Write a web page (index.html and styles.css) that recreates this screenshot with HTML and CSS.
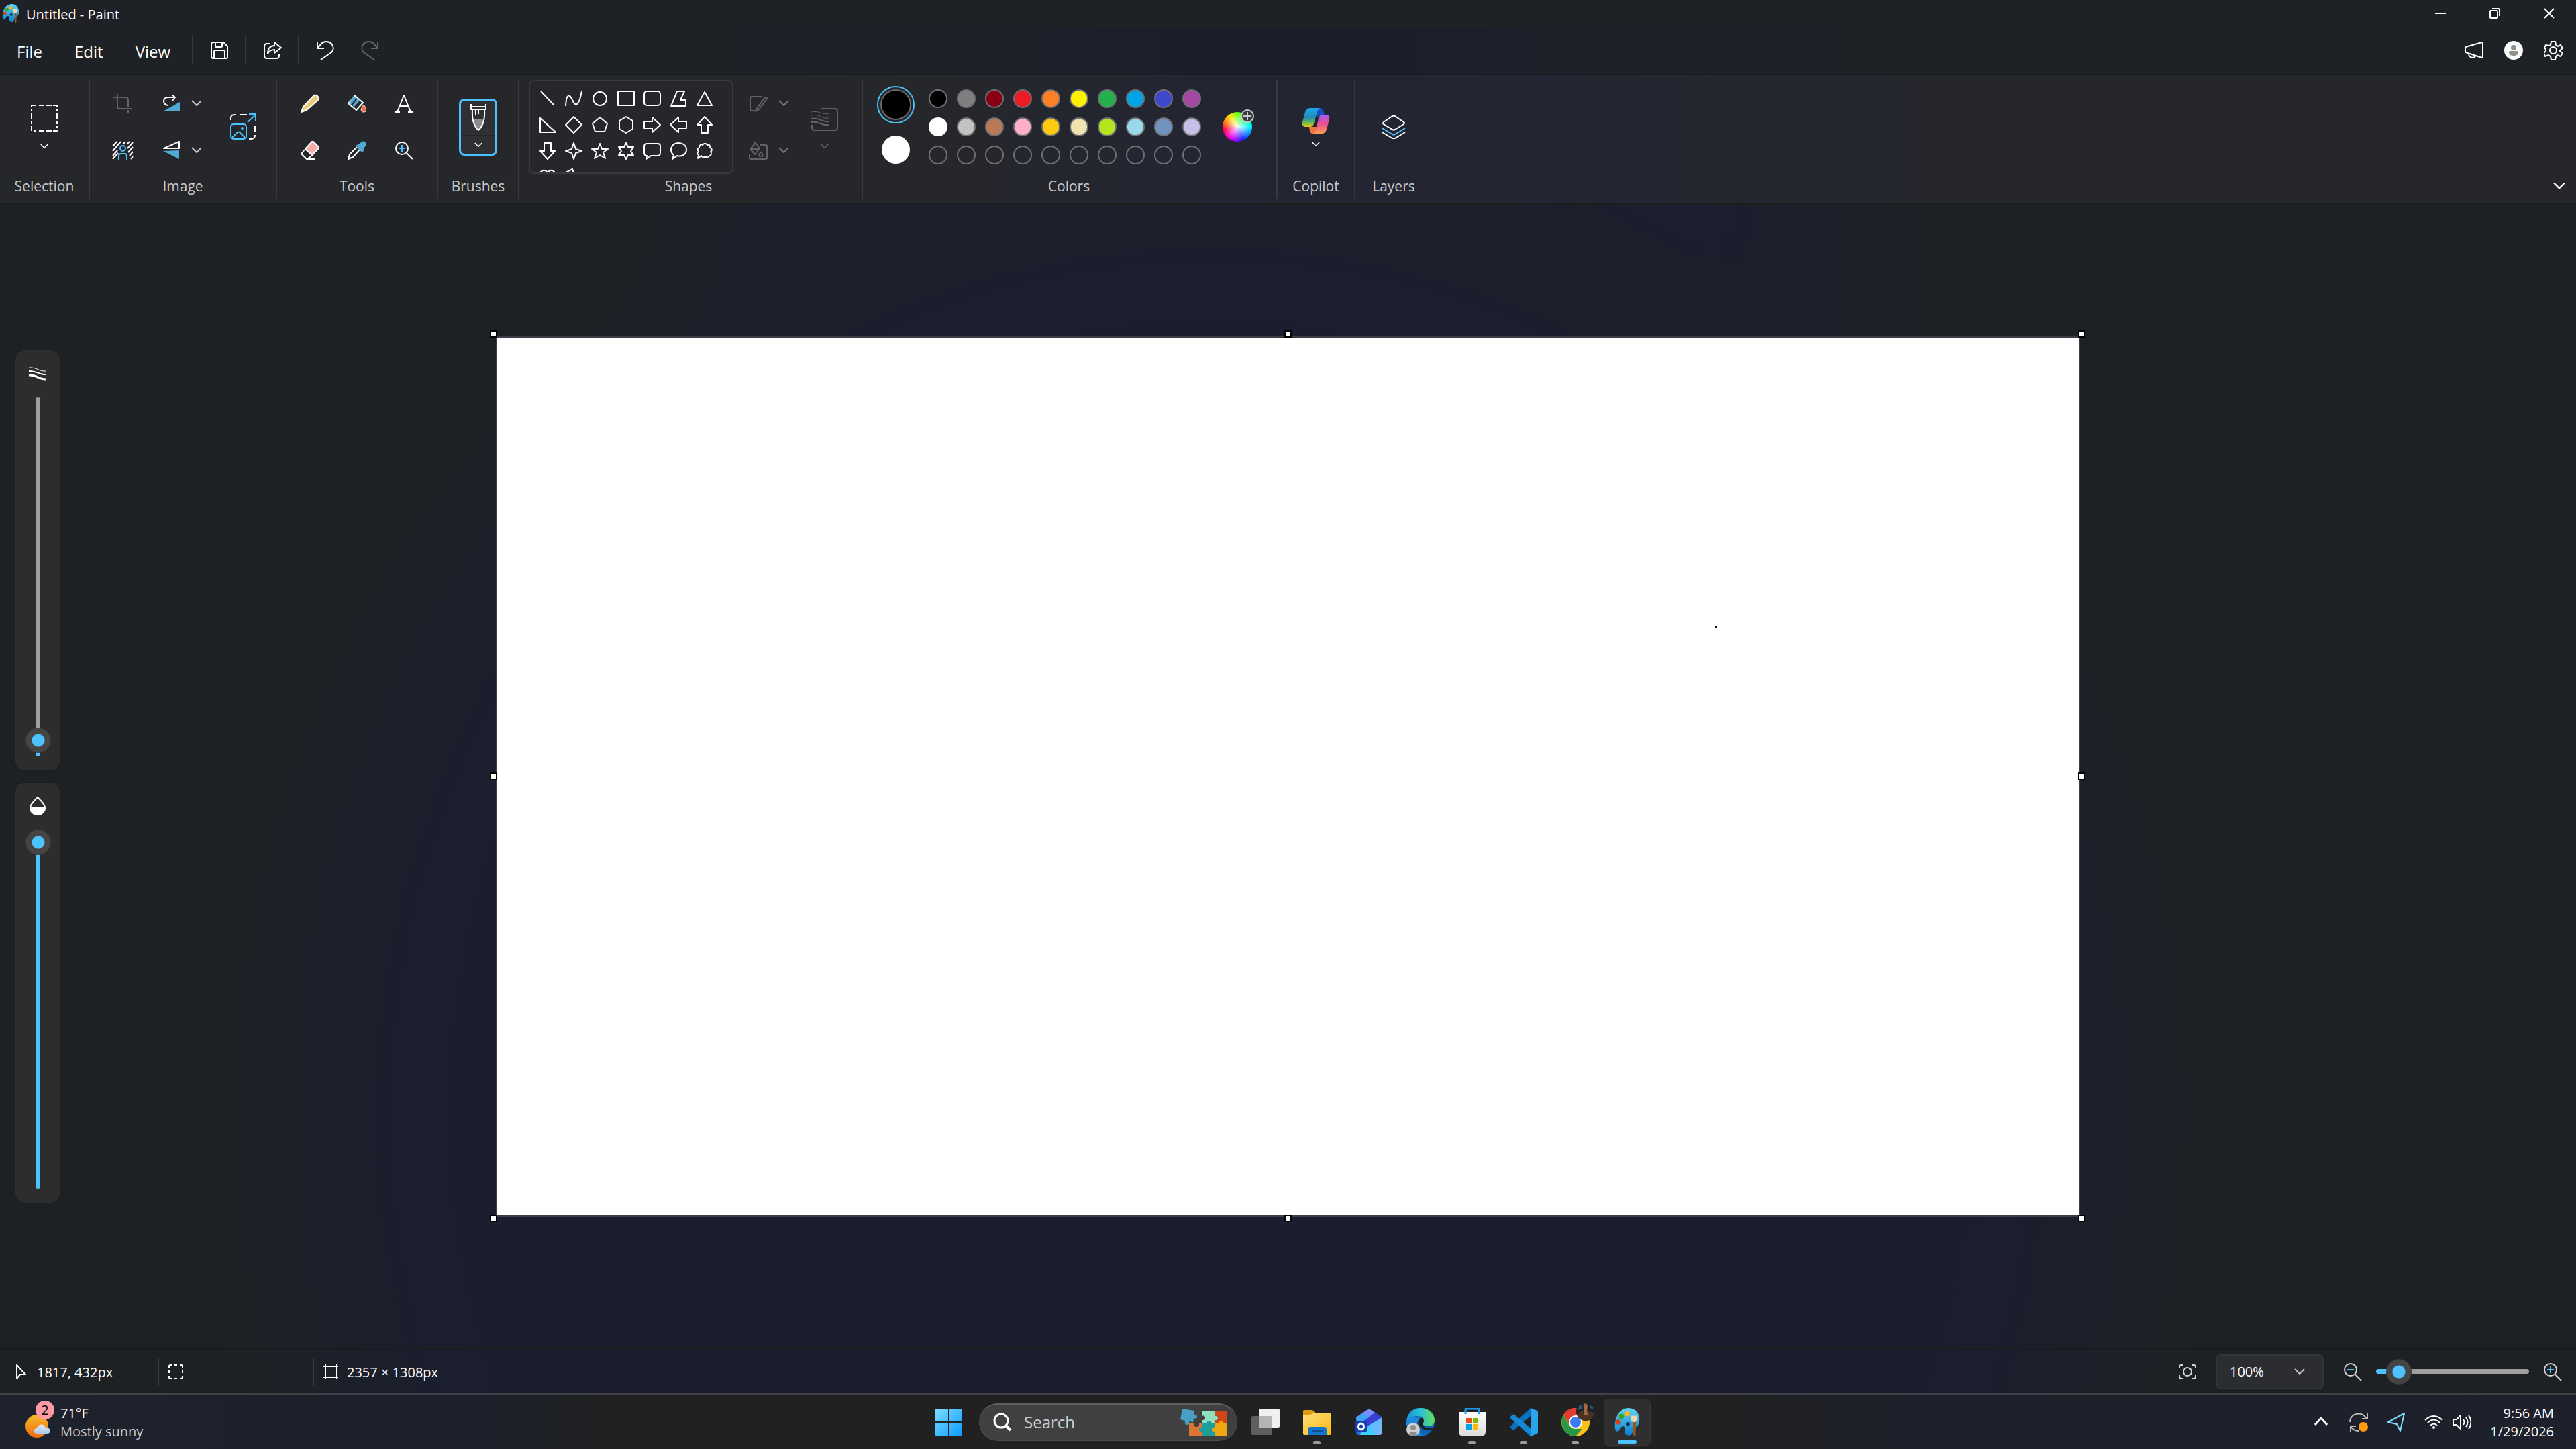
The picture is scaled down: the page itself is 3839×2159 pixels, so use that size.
FILE: index.html
```html
<!DOCTYPE html>
<html lang="en">
<head>
<meta charset="utf-8">
<meta name="viewport" content="width=device-width, initial-scale=1">
<title>Untitled - Paint</title>
<link rel="stylesheet" href="styles.css">
</head>
<body>
<svg class="sprite" aria-hidden="true">
  <defs>
    <linearGradient id="g-win" x1="0" y1="0" x2="1" y2="1"><stop offset="0" stop-color="#7fdcff"/><stop offset="1" stop-color="#0a9bff"/></linearGradient>
    <linearGradient id="g-folder" x1="0" y1="0" x2="1" y2="1"><stop offset="0" stop-color="#ffde7a"/><stop offset="1" stop-color="#fcb813"/></linearGradient>
    <linearGradient id="g-palette" x1="0" y1="0" x2="0" y2="1"><stop offset="0" stop-color="#5fd3f5"/><stop offset="1" stop-color="#0a7fd6"/></linearGradient>
    <linearGradient id="g-sun" x1="0" y1="0" x2="0" y2="1"><stop offset="0" stop-color="#f5bb2b"/><stop offset="1" stop-color="#f0690f"/></linearGradient>
    <linearGradient id="g-cloud" x1="0" y1="0" x2="0" y2="1"><stop offset="0" stop-color="#d8e8fb"/><stop offset="1" stop-color="#a9c8f2"/></linearGradient>
    <linearGradient id="g-cop1" x1="0" y1="0" x2="0" y2="1"><stop offset="0" stop-color="#1fa6ee"/><stop offset=".5" stop-color="#1f8fb4"/><stop offset=".75" stop-color="#5fb35a"/><stop offset="1" stop-color="#f3c51c"/></linearGradient>
    <linearGradient id="g-cop2" x1="0" y1="0" x2="0" y2="1"><stop offset="0" stop-color="#a259f0"/><stop offset=".5" stop-color="#ee4f8f"/><stop offset="1" stop-color="#ffa04e"/></linearGradient>
    <linearGradient id="g-edge" x1="0" y1="0" x2="1" y2="0"><stop offset="0" stop-color="#1a93d8"/><stop offset=".5" stop-color="#2bbfd4"/><stop offset="1" stop-color="#63df5b"/></linearGradient>
    <linearGradient id="g-store" x1="0" y1="0" x2="0" y2="1"><stop offset="0" stop-color="#fff"/><stop offset="1" stop-color="#dadada"/></linearGradient>
    <linearGradient id="g-out" x1="0" y1="0" x2="1" y2="1"><stop offset="0" stop-color="#43c6f8"/><stop offset="1" stop-color="#7fb4ff"/></linearGradient>
  </defs>

  <symbol id="chev" viewBox="0 0 16 10"><path d="M1 1l7 7 7-7"/></symbol>
  <symbol id="palette" viewBox="0 0 40 44">
    <path fill="url(#g-palette)" stroke="none" d="M22 0C34 0 40 10 39 20c-1 9-6 10-9 12-2 1-1 4-2 7-2 4-7 5-10 2-4-4 1-9-3-12-4-2-5 2-8 6-3 3-6 1-6-4C0 13 9 0 22 0z"/>
    <circle cx="20" cy="9" r="4" fill="#fbb614" stroke="none"/><circle cx="11" cy="13" r="4" fill="#3aa31a" stroke="none"/><circle cx="6" cy="22" r="4" fill="#cf4717" stroke="none"/><circle cx="21" cy="25" r="3" fill="#1b2a38" stroke="none"/>
    <path d="M29 20h5l-1 24h-3z" fill="#9a5a14" stroke="none"/><path d="M25 12h11c0 5-1 8-3 10h-4c-3-2-4-5-4-10z" fill="#f0d6b0" stroke="none"/>
  </symbol>
  <symbol id="save" viewBox="0 0 28 28"><path d="M5 2h15l6 6v16q0 2-2 2H5q-3 0-3-3V5q0-3 3-3zM8 2v6q0 1 1 1h8q1 0 1-1V2M6 26V16q0-2 2-2h12q2 0 2 2v10"/></symbol>
  <symbol id="share" viewBox="0 0 28 28"><path d="M10 4H6Q2 4 2 8v14q0 4 4 4h14q4 0 4-4v-2M17 2l10 8-10 8v-5c-5 0-8 2-10 6 0-8 4-12 10-12z"/></symbol>
  <symbol id="undo" viewBox="0 0 28 28"><path d="M2 1v10h10M2 11l6-7c4-4 11-4 15 0 4 5 3 10 0 13L7 28"/></symbol>
  <symbol id="redo" viewBox="0 0 28 28"><path d="M26 1v10H16M26 11l-6-7C16 0 9 0 5 4 1 9 2 14 5 17l16 11"/></symbol>
  <symbol id="mega" viewBox="0 0 28 28"><path d="M26 2L3 8.500q-2 .5-2 2v5q0 1.500 2 2L26 25q1 0 1-1V3q0-1-1-1zM6 19c0 6 9 8 10 3"/></symbol>
  <symbol id="gear" viewBox="0 0 28 28"><circle cx="14" cy="14" r="5"/><path d="M11 1h6l1 5 3 2 4-2 3 5-4 3v1l4 3-3 5-5-2-2 2-1 5h-6l-1-5-3-2-5 2-2-5 3-3v-2L1 10l2-4 5 1 2-1z"/></symbol>
  <symbol id="marquee" viewBox="0 0 42 42"><path stroke-dasharray="8 3" d="M8 2H2v8M13 2h20M34 2h6v8M2 14v16M40 14v16M2 32v8h6M13 40h20M34 40h6v-8"/></symbol>
  <symbol id="crop" viewBox="0 0 28 28"><path d="M6 0v19q0 3 3 3h19M0 5h5M9 5h9q4 0 4 4v10M22 24v4"/></symbol>
  <symbol id="rotate" viewBox="0 0 28 28"><path d="M9 17C5 16 3 14 3 11c0-4 3-6 7-6h10M15 1l5 4-4 5"/><path class="bf" d="M27 12v14H2z"/></symbol>
  <symbol id="flip" viewBox="0 0 28 28"><path d="M26 1v10H3z"/><path class="bf" d="M26 14v13L2 15z"/></symbol>
  <symbol id="removebg" viewBox="0 0 32 28"><path d="M1 8l6-7M1 15L13 1M1 22L8 14M1 27l8-9M16 5l4-4M22 5l4-4M23 11l8-9M24 17l7-8M26 22l5-6M28 27l3-4"/><g class="bl"><circle cx="16" cy="11" r="4"/><path d="M10 28v-6q0-3 3-3h6q3 0 3 3v6"/></g></symbol>
  <symbol id="resize" viewBox="0 0 42 42"><path d="M3 11V8q0-5 5-5h2M16 3h11M39 20v8M39 33q0 6-6 6h-3"/><g class="bl"><rect x="3" y="17" width="23" height="22" rx="4"/><path d="M5 37l8-8q1-1 3 0l8 8M28 14L40 3M30 2h10v11"/><circle cx="20" cy="23" r="1"/></g></symbol>
  <symbol id="pencil" viewBox="0 0 28 28"><path fill="#edc97a" d="M19 3q3-3 6 0t1 6L9 24l-8 3 3-8z"/></symbol>
  <symbol id="bucket" viewBox="0 0 28 28"><path d="M9 1l14 12-10 11L1 14 11 3"/><path class="bf" d="M9 3l4 3-8 10-3-3zM15 7l3 3-8 9-3-2z"/><path d="M24 16c6 8 4 11 0 11s-6-3 0-11z" fill="#f4683c" stroke-width="1"/></symbol>
  <symbol id="text" viewBox="0 0 28 28"><path d="M4 27L14 2l10 25M8 18h12M1 27h7M20 27h7"/></symbol>
  <symbol id="eraser" viewBox="0 0 28 28"><path d="M6 13L2 18q-1 1 0 2l7 7h13M10 27l9-7"/><path fill="#f4acac" d="M17 1q1-1 2 0l8 8q1 1 0 2L17 21 7 12z"/></symbol>
  <symbol id="picker" viewBox="0 0 28 28"><path d="M14 9L3 20l-2 7 7-3 10-11"/><path class="bf" d="M13 6l4-1q5-6 9-4 4 3-1 9l-2 7-6-3z"/></symbol>
  <symbol id="zoomin" viewBox="0 0 28 28"><circle cx="11" cy="11" r="9"/><path d="M18 18l9 9"/><path class="bl" d="M11 6v10M6 11h10"/></symbol>
  <symbol id="zoomout" viewBox="0 0 28 28"><circle cx="11" cy="11" r="9"/><path d="M18 18l9 9"/><path class="bl" d="M6 11h10"/></symbol>
  <symbol id="brush" viewBox="0 0 28 42"><path d="M3 1v8h22V1M3 5h22"/><path fill="#8c8c8c" stroke="none" d="M6 25q8-4 16 0-1 8-8 15Q7 33 6 25z"/><path d="M5 9c-1 16 2 25 9 31 7-6 10-15 9-31M10 10v8M14 10v6"/></symbol>
  <symbol id="penbox" viewBox="0 0 28 28"><path d="M20 4H4Q2 4 2 6v17q0 2 2 2h5M13 20L24 5q3-1 3 2L15 23l-5 3z"/></symbol>
  <symbol id="fillbox" viewBox="0 0 28 28"><path d="M1 20v5q0 2 2 2h22q2 0 2-2V8q0-2-2-2h-8M9 2l7 9-7 9-7-8 7-8zM2 12h14M18 16c4 5 3 7 0 7s-4-2 0-7"/></symbol>
  <symbol id="size" viewBox="0 0 42 42"><path d="M16 7h20q4 0 4 4v24q0 4-4 4H6q-4 0-4-4v-4"/><path d="M1 12c12-3 16 5 26 2M1 17c12-3 16 6 26 4" stroke-width="1"/><path d="M1 22c12-3 16 6 26 4M1 27c12-2 16 6 26 4"/></symbol>
  <symbol id="layers" viewBox="0 0 36 36"><path d="M16 2q2-1 4 0l13 9q2 1 0 3L20 22q-2 1-4 0L3 14q-2-1 0-3z"/><path class="bl" d="M1 20l15 9q2 1 4 0l15-9"/><path d="M1 26l15 9q2 1 4 0l15-9"/></symbol>
  <symbol id="copilot" viewBox="0 0 42 40"><path fill="#1551c4" stroke="none" d="M20 1h7q4 0 5 4l2 6h-4q-5 0-7 5z"/><path fill="url(#g-cop1)" stroke="none" d="M12 1h16q-4 1-5 6l-5 17q-1 5-6 5H5q-5 0-4-7L5 7q2-6 7-6z"/><path fill="#f1743a" stroke="none" d="M11 29h11l-2 10h-4q-3 0-4-4z"/><path fill="url(#g-cop2)" stroke="none" d="M29 11h8q5 0 4 7l-4 15q-2 6-7 6H16q4-1 5-6l4-16q1-5 4-6z"/></symbol>
  <symbol id="wave" viewBox="0 0 28 28"><path stroke-width="1" d="M1 5c12-1 15 6 26 5"/><path d="M1 10c12-1 15 6 26 5"/><path stroke-width="3" d="M1 16c12-1 15 7 26 6"/></symbol>
  <symbol id="drop" viewBox="0 0 28 28"><path d="M14 1C8 7 3 12 3 17a11 10 0 0 0 22 0C25 12 20 7 14 1z"/><path fill="#fff" stroke="none" d="M3 15h22c1 8-5 12-11 12S2 23 3 15z"/></symbol>
  <symbol id="cursor" viewBox="0 0 28 28"><path d="M8 4v20l5-6h8z"/></symbol>
  <symbol id="selbox" viewBox="0 0 28 28"><path d="M4 8V6q0-2 2-2h2M12 4h4M20 4h2q2 0 2 2v2M24 12v4M24 20v2q0 2-2 2h-2M16 24h-4M8 24H6q-2 0-2-2v-2M4 16v-4"/></symbol>
  <symbol id="frame" viewBox="0 0 28 28"><path d="M6 3v22M22 3v22M3 6h22M3 22h22"/></symbol>
  <symbol id="focus" viewBox="0 0 28 28"><circle cx="14" cy="14" r="6"/><path d="M2 9V7q0-3 3-3h3M20 4h3q3 0 3 3v2M26 19v2q0 3-3 3h-3M8 24H5q-3 0-3-3v-2"/></symbol>
</svg>

<div class="app">
  <header class="titlebar">
    <svg class="app-icon"><use href="#palette"/></svg>
    <span class="title">Untitled - Paint</span>
    <div class="win-controls">
      <button aria-label="Minimize"><svg class="ic16" viewBox="0 0 16 16"><path d="M0 8h16"/></svg></button>
      <button aria-label="Restore"><svg class="ic16" viewBox="0 0 16 16"><rect x="1" y="4" width="11" height="11" rx="1"/><path d="M4 1h9q2 0 2 2v9"/></svg></button>
      <button aria-label="Close"><svg class="ic16" viewBox="0 0 16 16"><path d="M1 1l14 14M15 1L1 15"/></svg></button>
    </div>
  </header>

  <nav class="menubar">
    <div class="menus">
      <button>File</button><button>Edit</button><button>View</button>
    </div>
    <div class="quick">
      <span class="vsep"></span>
      <button aria-label="Save"><svg class="ic"><use href="#save"/></svg></button>
      <span class="vsep"></span>
      <button aria-label="Share"><svg class="ic"><use href="#share"/></svg></button>
      <span class="vsep"></span>
      <button aria-label="Undo"><svg class="ic"><use href="#undo"/></svg></button>
      <button class="dim" aria-label="Redo" disabled><svg class="ic"><use href="#redo"/></svg></button>
    </div>
    <div class="account">
      <button aria-label="Feedback"><svg class="ic"><use href="#mega"/></svg></button>
      <button aria-label="Account"><svg class="ic" viewBox="0 0 28 28"><circle cx="14" cy="14" r="14" fill="#fafafa" stroke="none"/><circle cx="14" cy="10" r="4" fill="#8f8f8f" stroke="none"/><path d="M9 15h10q2 0 2 2c0 3-3 5-7 5s-7-2-7-5q0-2 2-2z" fill="#8f8f8f" stroke="none"/></svg></button>
      <button aria-label="Settings"><svg class="ic"><use href="#gear"/></svg></button>
    </div>
  </nav>

  <section class="ribbon" aria-label="Ribbon">
    <div class="group g-wide">
      <div class="body"><button class="tall" aria-label="Selection"><svg class="ic42"><use href="#marquee"/></svg><svg class="chev-s"><use href="#chev"/></svg></button></div>
      <div class="label">Selection</div>
    </div>
    <div class="group g-std">
      <div class="body">
        <div class="col"><button class="cell dim" aria-label="Crop" disabled><svg class="ic"><use href="#crop"/></svg></button><button class="cell" aria-label="Remove background"><svg class="ic32"><use href="#removebg"/></svg></button></div>
        <div class="col split-col">
          <div class="split"><button aria-label="Rotate"><svg class="ic"><use href="#rotate"/></svg></button><button class="drop" aria-label="Rotate options"><svg class="chev-m"><use href="#chev"/></svg></button></div>
          <div class="split"><button aria-label="Flip"><svg class="ic"><use href="#flip"/></svg></button><button class="drop" aria-label="Flip options"><svg class="chev-m"><use href="#chev"/></svg></button></div>
        </div>
        <button class="tall resize" aria-label="Resize"><svg class="ic42"><use href="#resize"/></svg></button>
      </div>
      <div class="label">Image</div>
    </div>
    <div class="group g-std">
      <div class="body tools">
        <button class="cell" aria-label="Pencil"><svg class="ic"><use href="#pencil"/></svg></button>
        <button class="cell" aria-label="Fill"><svg class="ic"><use href="#bucket"/></svg></button>
        <button class="cell" aria-label="Text"><svg class="ic"><use href="#text"/></svg></button>
        <button class="cell" aria-label="Eraser"><svg class="ic"><use href="#eraser"/></svg></button>
        <button class="cell" aria-label="Color picker"><svg class="ic"><use href="#picker"/></svg></button>
        <button class="cell" aria-label="Magnifier"><svg class="ic"><use href="#zoomin"/></svg></button>
      </div>
      <div class="label">Tools</div>
    </div>
    <div class="group g-wide">
      <div class="body"><button class="brush" aria-label="Brushes"><span class="brush-top"><svg class="brush-ic"><use href="#brush"/></svg></span><span class="brush-more"><svg class="chev-s"><use href="#chev"/></svg></span></button></div>
      <div class="label">Brushes</div>
    </div>
    <div class="group g-shapes">
      <div class="body">
        <div class="shapes">
          <button aria-label="Line"><svg class="sh" viewBox="0 0 26 26"><path d="M3 2l20 21"/></svg></button>
          <button aria-label="Curve"><svg class="sh" viewBox="0 0 26 26"><path d="M1 24C2 4 7 6 11 15s9 12 14-13"/></svg></button>
          <button aria-label="Oval"><svg class="sh" viewBox="0 0 26 26"><circle cx="13" cy="13" r="10"/></svg></button>
          <button aria-label="Rectangle"><svg class="sh" viewBox="0 0 26 26"><path d="M1 2h24v21H1z"/></svg></button>
          <button aria-label="Rounded rectangle"><svg class="sh" viewBox="0 0 26 26"><rect x="1" y="2" width="24" height="21" rx="4"/></svg></button>
          <button aria-label="Polygon"><svg class="sh" viewBox="0 0 26 26"><path d="M11 2h11l-6 13h8v9H2z"/></svg></button>
          <button aria-label="Triangle"><svg class="sh" viewBox="0 0 26 26"><path d="M13 3l11 20H2z"/></svg></button>
          <button aria-label="Right triangle"><svg class="sh" viewBox="0 0 26 26"><path d="M2 3v21h23z"/></svg></button>
          <button aria-label="Diamond"><svg class="sh" viewBox="0 0 26 26"><path d="M13 1l12 12-12 12L1 13z"/></svg></button>
          <button aria-label="Pentagon"><svg class="sh" viewBox="0 0 26 26"><path d="M13 2l11 9-4 12H6L2 11z"/></svg></button>
          <button aria-label="Hexagon"><svg class="sh" viewBox="0 0 26 26"><path d="M13 1l10 6v12l-10 6-10-6V7z"/></svg></button>
          <button aria-label="Right arrow"><svg class="sh" viewBox="0 0 26 26"><path d="M1 8h12V2l12 11-12 11v-6H1z"/></svg></button>
          <button aria-label="Left arrow"><svg class="sh" viewBox="0 0 26 26"><path d="M25 8H13V2L1 13l12 11v-6h12z"/></svg></button>
          <button aria-label="Up arrow"><svg class="sh" viewBox="0 0 26 26"><path d="M8 25V13H2L13 1l11 12h-6v12z"/></svg></button>
          <button aria-label="Down arrow"><svg class="sh" viewBox="0 0 26 26"><path d="M8 1v12H2l11 12 11-12h-6V1z"/></svg></button>
          <button aria-label="Four-point star"><svg class="sh" viewBox="0 0 26 26"><path d="M13 1l3 9 9 3-9 3-3 9-3-9-9-3 9-3z"/></svg></button>
          <button aria-label="Five-point star"><svg class="sh" viewBox="0 0 26 26"><path d="M13 2l3 8h9l-7 5 3 9-8-5-8 5 3-9-7-5h9z"/></svg></button>
          <button aria-label="Six-point star"><svg class="sh" viewBox="0 0 26 26"><path d="M13 1l3 6h8l-4 6 4 6h-8l-3 6-3-6H2l4-6-4-6h8z"/></svg></button>
          <button aria-label="Rounded callout"><svg class="sh" viewBox="0 0 26 26"><path d="M5 2h16q4 0 4 4v10q0 4-4 4H11l-7 5 1-5q-4 0-4-4V6q0-4 4-4z"/></svg></button>
          <button aria-label="Oval callout"><svg class="sh" viewBox="0 0 26 26"><path d="M6 19C-2 12 3 1 13 1c7 0 12 4 12 10 0 7-7 11-14 9l-7 5z"/></svg></button>
          <button aria-label="Cloud callout"><svg class="sh" viewBox="0 0 26 26"><path d="M4 19c-3-2-2-4 0-5-3-3-1-6 1-6 0-4 3-6 5-4 2-3 5-3 7 0 3-1 5 1 4 4 3 1 4 4 1 6 2 2 1 6-2 6-1 3-4 3-6 1-2 2-5 2-6-1l-5 4z"/></svg></button>
          <button aria-label="Heart"><svg class="sh" viewBox="0 0 26 26"><path d="M13 24L2 12C-1 5 8-1 13 6c5-7 14-1 11 6z"/></svg></button>
          <button aria-label="Lightning"><svg class="sh" viewBox="0 0 26 26"><path d="M1 6l10-5 3 9 11 15L8 13z"/></svg></button>
        </div>
        <div class="col split-col">
          <div class="split dim"><button aria-label="Outline"><svg class="ic"><use href="#penbox"/></svg></button><button class="drop" aria-label="Outline options"><svg class="chev-m"><use href="#chev"/></svg></button></div>
          <div class="split dim"><button aria-label="Shape fill"><svg class="ic"><use href="#fillbox"/></svg></button><button class="drop" aria-label="Shape fill options"><svg class="chev-m"><use href="#chev"/></svg></button></div>
        </div>
        <button class="tall size dim" aria-label="Size"><svg class="ic42"><use href="#size"/></svg><svg class="chev-s"><use href="#chev"/></svg></button>
      </div>
      <div class="label">Shapes</div>
    </div>
    <div class="group g-colors">
      <div class="body">
        <div class="current"><button class="primary" aria-label="Color 1"></button><button class="secondary" aria-label="Color 2"></button></div>
        <div class="swatches">
          <button class="c-black" aria-label="Black"></button><button class="c-gray" aria-label="Gray"></button><button class="c-darkred" aria-label="Dark red"></button><button class="c-red" aria-label="Red"></button><button class="c-orange" aria-label="Orange"></button><button class="c-yellow" aria-label="Yellow"></button><button class="c-green" aria-label="Green"></button><button class="c-turquoise" aria-label="Turquoise"></button><button class="c-indigo" aria-label="Indigo"></button><button class="c-purple" aria-label="Purple"></button>
          <button class="c-white" aria-label="White"></button><button class="c-lightgray" aria-label="Light gray"></button><button class="c-brown" aria-label="Brown"></button><button class="c-rose" aria-label="Rose"></button><button class="c-gold" aria-label="Gold"></button><button class="c-tan" aria-label="Light yellow"></button><button class="c-lime" aria-label="Lime"></button><button class="c-aqua" aria-label="Light turquoise"></button><button class="c-bluegray" aria-label="Blue-gray"></button><button class="c-lavender" aria-label="Lavender"></button>
          <button aria-label="Empty 1"></button><button aria-label="Empty 2"></button><button aria-label="Empty 3"></button><button aria-label="Empty 4"></button><button aria-label="Empty 5"></button><button aria-label="Empty 6"></button><button aria-label="Empty 7"></button><button aria-label="Empty 8"></button><button aria-label="Empty 9"></button><button aria-label="Empty 10"></button>
        </div>
        <button class="tall edit-colors" aria-label="Edit colors"><span class="wheel"><svg class="plus" viewBox="0 0 20 20"><circle cx="10" cy="10" r="9"/><path d="M10 4v12M4 10h12"/></svg></span></button>
      </div>
      <div class="label">Colors</div>
    </div>
    <div class="group g-narrow">
      <div class="body"><button class="tall copilot" aria-label="Copilot"><svg class="ic42"><use href="#copilot"/></svg><svg class="chev-s"><use href="#chev"/></svg></button></div>
      <div class="label">Copilot</div>
    </div>
    <div class="group g-narrow last">
      <div class="body"><button class="tall" aria-label="Layers"><svg class="ic36"><use href="#layers"/></svg></button></div>
      <div class="label">Layers</div>
    </div>
    <button class="collapse" aria-label="Collapse ribbon"><svg class="chev-l"><use href="#chev"/></svg></button>
  </section>

  <main class="workspace">
    <div class="rails">
      <label class="rail"><svg class="ic" role="img" aria-label="Brush size"><use href="#wave"/></svg><input class="r-size" type="range" min="0" max="100" value="1"></label>
      <label class="rail"><svg class="ic" role="img" aria-label="Opacity"><use href="#drop"/></svg><input class="r-opacity" type="range" min="0" max="100" value="100"></label>
    </div>
    <div class="paper">
      <svg class="art" width="2357" height="1308" viewBox="0 0 2357 1308"><rect x="1815" y="430" width="3" height="3"/></svg>
      <i class="h nw"></i><i class="h n"></i><i class="h ne"></i><i class="h w"></i><i class="h e"></i><i class="h sw"></i><i class="h s"></i><i class="h se"></i>
    </div>
  </main>

  <footer class="status">
    <div class="stat stat-pos"><svg class="ic"><use href="#cursor"/></svg><span>1817, 432px</span></div>
    <span class="vsep"></span>
    <div class="stat stat-sel"><svg class="ic"><use href="#selbox"/></svg></div>
    <span class="vsep"></span>
    <div class="stat"><svg class="ic"><use href="#frame"/></svg><span>2357 × 1308px</span></div>
    <div class="zoom">
      <button aria-label="Fit to window"><svg class="ic"><use href="#focus"/></svg></button>
      <div class="zoom-pick"><select aria-label="Zoom level"><option>100%</option><option>200%</option></select><svg class="chev-m"><use href="#chev"/></svg></div>
      <button aria-label="Zoom out"><svg class="ic"><use href="#zoomout"/></svg></button>
      <input class="r-zoom" type="range" min="0" max="100" value="8" aria-label="Zoom">
      <button aria-label="Zoom in"><svg class="ic"><use href="#zoomin"/></svg></button>
    </div>
  </footer>
</div>

<div class="taskbar">
  <button class="weather" aria-label="Weather">
    <span class="weather-pic"><svg viewBox="0 0 42 42"><circle cx="18" cy="22" r="17" fill="url(#g-sun)" stroke="none"/><path fill="url(#g-cloud)" stroke="none" d="M18 33c-6 0-6-8 0-8 2-6 10-8 13-1 8-1 9 9 2 9z"/></svg><span class="badge">2</span></span>
    <span class="two"><span>71°F</span><span class="soft">Mostly sunny</span></span>
  </button>
  <div class="dock">
    <button aria-label="Start"><svg class="tb" viewBox="0 0 42 42"><path fill="url(#g-win)" stroke="none" d="M2 1h18v19H1V2zM22 1h18q1 0 1 1v18H22zM1 22h19v19H2q-1 0-1-1zM22 22h19v18q0 1-1 1H22z"/></svg></button>
    <div class="search">
      <svg class="ic" viewBox="0 0 28 28"><circle cx="12" cy="12" r="10" stroke-width="3"/><path stroke-width="4" d="M19 19l7 7"/></svg>
      <input type="text" placeholder="Search" aria-label="Search">
      <svg class="puzzle" viewBox="0 0 72 42">
        <path fill="#4aa0c4" stroke="none" d="M4 1l18 3-1 7q5-2 5 2t-5 2l-1 6-6-1q1 5-3 5t-3-6l-7-2z"/>
        <path fill="#8fe0bf" stroke="none" d="M34 5h18v7q5-1 5 3t-5 3v6H34v-6q5 0 4-4t-4-2z"/>
        <path fill="#cf4617" stroke="none" d="M52 5h19v18H52v-5q5 1 5-3t-5-3z"/>
        <path fill="#dc7630" stroke="none" d="M14 23h7q-1 5 4 5t4-5h6v18H14z"/>
        <path fill="#1d9d9b" stroke="none" d="M34 23h7q-1-4 3-4t3 4h6v18H34v-6q-5 1-5-3t5-3z"/>
        <path fill="#eca712" stroke="none" d="M53 23h6q-1-4 3-4t3 4h6v18H53v-6q-5 1-5-3t5-3z"/>
      </svg>
    </div>
    <button aria-label="Task view"><svg class="tb" viewBox="0 0 42 42"><rect x="0" y="12" width="31" height="28" rx="2" fill="#5e5e5f" stroke="none"/><rect x="11" y="1" width="31" height="28" rx="2" fill="#f0f0f0" stroke="none"/><path fill="#b5b5b5" stroke="none" d="M11 12h18q2 0 2 2v15H13q-2 0-2-2z"/></svg></button>
    <button class="run" aria-label="File Explorer"><svg class="tb" viewBox="0 0 42 42"><path fill="#dc9a0d" stroke="none" d="M1 3h13l4 4-4 6H0V4z"/><path fill="url(#g-folder)" stroke="none" d="M14 8h26q2 0 2 2v28q0 2-2 2H2q-2 0-2-2V10h11z"/><path fill="#1277c8" stroke="none" d="M7 40V32q0-4 4-4h20q4 0 4 4v8z"/><path d="M13 34h17" stroke="#0b4f94"/></svg></button>
    <button aria-label="Outlook"><svg class="tb" viewBox="0 0 42 42"><path fill="#2a6de0" stroke="none" d="M21 1l19 12q1 1 1 3v19q0 5-5 5H7q-5 0-5-5V14z"/><path fill="#7d8cff" stroke="none" d="M21 1l9 6L4 25 2 14z"/><path fill="#38a6f2" stroke="none" d="M12 8l9 5L3 25V14z"/><path fill="#3a3fd0" stroke="none" d="M30 7l11 7L18 27l-8-5z"/><path fill="url(#g-out)" stroke="none" d="M41 14v21q0 5-5 5H8l4-9z"/><path fill="#3fd0fa" stroke="none" d="M12 26q18 3 18 14H8z"/><rect x="1" y="19" width="17" height="17" rx="3" fill="#1340ad" stroke="none"/><ellipse cx="9.500" cy="27.500" rx="4" ry="4.500" stroke="#fff" stroke-width="3"/></svg></button>
    <button aria-label="Edge"><svg class="tb" viewBox="0 0 42 42"><circle cx="21" cy="21" r="21" fill="#0f63b4" stroke="none"/><path fill="url(#g-edge)" stroke="none" d="M0 20C1 8 9 0 21 0c12 0 21 8 21 18 0 7-5 9-10 9-6 0-9-3-7-5 2-6-2-10-9-10C8 12 2 16 0 20z"/><path fill="#212121" stroke="none" d="M24 15c3 3 2 5 1 8-1 3 2 8 15 7q-3 4-9 3c-10-1-16-9-13-15 2-3 5-4 7-3z"/><path fill="#1e86dc" stroke="none" d="M0 20c5-9 17-9 20-4-7 5-5 18 5 25C9 44-1 32 0 20z"/><circle cx="10" cy="32" r="10" fill="#cfcfcf" stroke="none"/><circle cx="10" cy="29" r="4" fill="#8d8d8d" stroke="none"/><path fill="#8d8d8d" stroke="none" d="M4 39q0-4 6-4t6 4q-6 5-12 0z"/></svg></button>
    <button class="run" aria-label="Microsoft Store"><svg class="tb" viewBox="0 0 42 42"><path d="M11 8V2q0-1 1-1h18q1 0 1 1v6" stroke="#1c9be8" stroke-width="3"/><path fill="url(#g-store)" stroke="none" d="M1 6h40v29q0 7-7 7H8q-7 0-7-7z"/><path d="M11 9V4M31 9V4" stroke="#1c9be8" stroke-width="3"/><path fill="#f04e1f" stroke="none" d="M12 15h8v8h-8z"/><path fill="#7fb900" stroke="none" d="M22 15h8v8h-8z"/><path fill="#04a3ee" stroke="none" d="M12 24h8v8h-8z"/><path fill="#fdb80a" stroke="none" d="M22 24h8v8h-8z"/></svg></button>
    <button class="run" aria-label="Visual Studio Code"><svg class="tb" viewBox="0 0 42 42"><path fill="#0a72ba" stroke="none" d="M31 0v12L7 32q-1 1-3 0l-3-3q-1-1 0-2z"/><path fill="#1389d3" stroke="none" d="M31 42V30L7 10q-1-1-3 0l-3 3q-1 1 0 2z"/><path fill="#2ba4ee" stroke="none" d="M31 0l10 4q1 1 1 3v28q0 2-1 3l-10 4z"/></svg></button>
    <button class="run" aria-label="Chrome"><svg class="tb" viewBox="0 0 42 42"><circle cx="21" cy="21" r="21" fill="#fbc116" stroke="none"/><path fill="#e33b2e" stroke="none" d="M3 10C12-4 32-4 39 11H21L12 25z"/><path fill="#269848" stroke="none" d="M3 10l9 16q3 5 9 5h10L21 42C3 41-4 23 3 10z"/><circle cx="21" cy="21" r="10" fill="#fff" stroke="none"/><circle cx="21" cy="21" r="8" fill="#3b7ded" stroke="none"/></svg><svg class="avatar" viewBox="0 0 28 28"><circle cx="14" cy="14" r="14" fill="#1b2229" stroke="none"/><path fill="#4a3122" stroke="none" d="M1 18q6-6 13-5t13 4c-2 14-24 14-26 1z"/><path fill="#a4673f" stroke="none" d="M11 3q4-2 6 2l-1 9 2 5h-7l1-7q-2-4-1-9z"/><path fill="#35576b" stroke="none" d="M4 6l4-2v6l-5 2zM21 5l4 3v3l-4-2z"/></svg></button>
    <button class="run active" aria-label="Paint"><svg class="tb"><use href="#palette"/></svg></button>
  </div>
  <div class="tray">
    <button aria-label="Show hidden icons"><svg class="ic" viewBox="0 0 28 28"><path stroke-width="3" d="M5 18l9-10 9 10"/></svg></button>
    <button aria-label="Update"><svg class="ic" viewBox="0 0 28 28"><path stroke="#bbb" d="M1 14C1 0 20-3 26 9M27 1v8h-8M2 28v-8h8M2 20q4 7 12 7"/><circle cx="21" cy="21" r="7" fill="#ff9a0a" stroke="none"/></svg></button>
    <button aria-label="Location"><svg class="ic" viewBox="0 0 28 28"><path stroke="#7fe0ff" d="M26 1L2 14l13 3 5 10z"/></svg></button>
    <button class="net" aria-label="Network and volume"><svg class="ic" viewBox="0 0 28 28"><path d="M1 11q13-12 26 0M5 15q9-9 18 0M9 19q5-5 10 0"/><circle cx="14" cy="22" r="2" fill="#fff" stroke="none"/></svg><svg class="ic" viewBox="0 0 28 28"><path d="M1 10h5l6-6v20l-6-6H1zM16 10q3 4 0 8M20 7q5 7 0 14M24 4q7 10 0 20"/></svg></button>
    <button class="clock"><span>9:56 AM</span><span>1/29/2026</span></button>
  </div>
</div>
</body>
</html>
```
FILE: styles.css
```css
:root {
  --accent: #4cc2ff;
  --line: #38393e;
  --edge: #1b1c1e;
  --dim: #636468;
}
* { box-sizing: border-box; }
body {
  margin: 0;
  min-height: 100vh;
  display: flex;
  flex-direction: column;
  background: #1e2124;
  color: #fff;
  font: 20px/28px "Open Sans", "Noto Sans", sans-serif;
}
button, input, select { font: inherit; color: inherit; margin: 0; }
button {
  border: 0;
  padding: 0;
  background: none;
  display: flex;
  align-items: center;
  justify-content: center;
}
svg { fill: none; stroke: currentColor; stroke-width: 2; stroke-linejoin: round; flex: none; display: block; }
.sprite { width: 0; height: 0; position: absolute; }
.bl { stroke: var(--accent); }
.bf { fill: #52a9d6; stroke: none; }
.ic { width: 28px; height: 28px; }
.ic16 { width: 16px; height: 16px; }
.ic32 { width: 32px; height: 28px; }
.ic36 { width: 36px; height: 36px; }
.ic42 { width: 42px; height: 42px; }
.chev-s { width: 12px; height: 10px; }
.chev-m { width: 16px; height: 10px; stroke: #c4c5c7; }
.chev-l { width: 18px; height: 12px; }
.dim { color: var(--dim); }
.dim .chev-m { stroke: #77787b; }
.vsep { width: 2px; height: 42px; background: var(--line); flex: none; }

.app {
  flex: 1;
  display: flex;
  flex-direction: column;
  background:
    radial-gradient(ellipse 39% 75% at 47% 80%, #1a1e2f 0%, #1a1e2f 76%, #1c202a 90%, rgba(30, 33, 36, 0) 100%),
    radial-gradient(ellipse 26% 50% at 50% 20%, #1a1e2f 0%, #1a1e2f 60%, rgba(30, 33, 36, 0) 100%),
    #1e2124;
}

.titlebar { height: 40px; display: flex; align-items: center; padding-left: 3px; gap: 10px; background: #1e2125; }
.title { padding-top: 3px; }
.app-icon { width: 26px; height: 28px; }
.win-controls { margin-left: auto; display: flex; align-self: stretch; }
.win-controls button { width: 81px; }

.menubar { height: 70px; display: flex; align-items: center; background: linear-gradient(90deg, #1e2125 25%, #1b1f2a 45%, #1b1f2a 55%, #1e2125 75%); }
.menus { display: flex; padding: 3px 13px 0 6px; gap: 10px; font-size: 24px; }
.menus button { padding: 0 19px; height: 56px; }
.quick { display: flex; align-items: center; gap: 11px; }
.quick button { width: 55px; height: 56px; }
.account { margin-left: auto; display: flex; gap: 31px; padding-right: 20px; }

.ribbon {
  display: flex;
  padding: 7px 0;
  border: solid var(--edge);
  border-width: 2px 0;
  background: linear-gradient(90deg, #26272b 36%, #232632 46%, #232632 60%, #26272b 80%);
}
.group { border-right: 2px solid var(--line); height: 177px; }
.group.last { border-right: 0; }
.g-wide { padding: 0 31px; }
.g-std { padding: 0 14px; }
.g-shapes { padding: 0 20px 0 14px; }
.g-colors { padding: 0 23px 0 21px; }
.g-narrow { padding: 0 22px; }
.body { height: 140px; display: flex; align-items: center; justify-content: center; margin-bottom: 4px; }
.label { text-align: center; color: #c8c9cb; font-size: 21px; white-space: nowrap; margin: 0 -20px; }
.cell { width: 70px; height: 70px; }
.tall { width: 70px; height: 140px; flex-direction: column; gap: 16px; }
.copilot { gap: 9px; }
.col { display: flex; flex-direction: column; }
.split-col { margin-left: 9px; }
.split { display: flex; height: 70px; }
.split button { width: 56px; }
.split .drop { width: 20px; }
.resize { margin-left: 24px; }
.size { margin-left: 16px; }
.tools { display: grid; grid-template-columns: repeat(3, 70px); }
.brush {
  width: 57px;
  height: 85px;
  border: 3px solid var(--accent);
  border-radius: 8px;
  background: #2f3033;
  flex-direction: column;
  align-items: stretch;
}
.brush-top { flex: 1; display: flex; align-items: center; justify-content: center; border-bottom: 2px solid #242528; }
.brush-more { height: 26px; display: flex; align-items: center; justify-content: center; }
.brush-ic { width: 28px; height: 42px; }

.shapes {
  width: 305px;
  height: 140px;
  border: 2px solid var(--line);
  border-radius: 8px;
  padding: 6px;
  overflow: hidden;
  display: grid;
  grid-template-columns: repeat(7, 39px);
  grid-auto-rows: 39px;
}
.sh { width: 26px; height: 26px; }

.current { display: flex; flex-direction: column; align-items: center; gap: 18px; width: 56px; align-self: flex-start; padding-top: 9px; }
.primary { width: 56px; height: 56px; border-radius: 50%; border: 2px solid var(--accent); padding: 5px; }
.primary::before { content: ""; width: 42px; height: 42px; border-radius: 50%; background: #000; border: 2px solid #6a6a6c; flex: none; }
.secondary { width: 42px; height: 42px; border-radius: 50%; background: #fff; }
.swatches { display: grid; grid-template-columns: repeat(10, 42px); grid-auto-rows: 42px; place-items: center; margin: 0 12px 0 14px; }
.swatches button { width: 28px; height: 28px; border-radius: 50%; border: 2px solid #6f7074; background-clip: border-box; }
.c-black { background: #000; }
.c-gray { background: #7f7f7f; }
.c-darkred { background: #880015; }
.c-red { background: #ed1c24; }
.c-orange { background: #ff7f27; }
.c-yellow { background: #fff200; }
.c-green { background: #22b14c; }
.c-turquoise { background: #00a2e8; }
.c-indigo { background: #3f48cc; }
.c-purple { background: #a349a4; }
.c-white { background: #fff; }
.c-lightgray { background: #c3c3c3; }
.c-brown { background: #b97a57; }
.c-rose { background: #ffaec9; }
.c-gold { background: #ffc90e; }
.c-tan { background: #efe4b0; }
.c-lime { background: #b5e61d; }
.c-aqua { background: #99d9ea; }
.c-bluegray { background: #7092be; }
.c-lavender { background: #c8bfe7; }
.swatches .c-white { border-color: #fff; }
.wheel {
  width: 44px;
  height: 44px;
  border-radius: 50%;
  position: relative;
  background:
    radial-gradient(circle, rgba(255, 255, 255, .9) 0, rgba(255, 255, 255, 0) 65%),
    conic-gradient(#6bff00, #00ff7b 50deg, #00f0ff 90deg, #0080ff 125deg, #1a1aff 155deg, #b300ff 195deg, #ff00c8 225deg, #ff0040 260deg, #ff7a00 290deg, #ffe600 325deg, #6bff00);
}
.plus { position: absolute; width: 20px; height: 20px; top: -4px; right: -3px; stroke: #c9c9c9; }
.plus circle { fill: #3a3a3c; }
.collapse { margin: 0 11px 5px auto; width: 28px; height: 28px; align-self: flex-end; }

.workspace { flex: 1; display: grid; grid-template-columns: minmax(0, 1fr) auto minmax(0, 1fr); align-items: center; }
.rails { display: flex; flex-direction: column; align-items: flex-start; gap: 18px; padding-left: 23px; }
.rail {
  width: 66px;
  padding: 21px 0;
  display: flex;
  flex-direction: column;
  align-items: center;
  gap: 21px;
  border-radius: 14px;
  background: #2d2d2d;
  box-shadow: 0 0 0 1px var(--edge);
}
input[type="range"] { appearance: none; background: none; display: block; }
.r-size, .r-opacity { writing-mode: vertical-lr; direction: rtl; width: 38px; height: 535px; }
.r-zoom { width: 228px; height: 38px; }
.r-size, .r-opacity, .r-zoom { --fill: linear-gradient(90deg, var(--accent) 14%, #9f9f9f 14%); }
.rail .r-size { --fill: linear-gradient(0deg, var(--accent) 5%, #9f9f9f 5%); }
.rail .r-opacity { --fill: linear-gradient(0deg, var(--accent) 96%, transparent 96%); }
input[type="range"]::-webkit-slider-runnable-track { border-radius: 4px; background: var(--fill); }
.r-size::-webkit-slider-runnable-track, .r-opacity::-webkit-slider-runnable-track { width: 7px; height: 100%; }
.r-zoom::-webkit-slider-runnable-track { height: 7px; }
input[type="range"]::-webkit-slider-thumb {
  appearance: none;
  width: 38px;
  height: 38px;
  border-radius: 50%;
  border: 1px solid #3a3a3b;
  background: radial-gradient(circle, var(--accent) 0 9px, #454546 10px);
}
.r-size::-webkit-slider-thumb, .r-opacity::-webkit-slider-thumb { margin-left: -15px; }
.r-zoom::-webkit-slider-thumb { margin-top: -15px; }

.paper { position: relative; background: #fff; box-shadow: 0 0 0 2px #3b3e45; }
.art { fill: #111; stroke: none; max-width: 100%; }
.h { position: absolute; width: 11px; height: 11px; background: #fff; border: 2px solid #000; }
.nw, .n, .ne { top: -11px; }
.sw, .s, .se { bottom: -10px; }
.nw, .w, .sw { left: -11px; }
.ne, .e, .se { right: -10px; }
.n, .s { left: calc(50% - 6px); }
.w, .e { top: calc(50% - 6px); }

.status { height: 67px; border-top: 2px solid var(--edge); display: flex; align-items: center; }
.status span { padding-top: 2px; }
.stat { display: flex; align-items: center; gap: 10px; padding-left: 11px; }
.stat-pos { width: 235px; padding-left: 17px; }
.stat-sel { width: 229px; }
.zoom { margin-left: auto; display: flex; align-items: center; gap: 21px; padding-right: 21px; }
.zoom .ic, .zoom .chev-m { color: #d4d5d6; }
.zoom-pick { display: grid; align-items: center; margin: 0 8px 0 7px; }
.zoom-pick select {
  grid-area: 1 / 1;
  appearance: none;
  width: 161px;
  height: 52px;
  padding: 0 19px;
  border: 2px solid #333437;
  border-radius: 7px;
  background: #2c2d30;
}
.zoom-pick svg { grid-area: 1 / 1; justify-self: end; margin-right: 28px; pointer-events: none; }

.taskbar {
  height: 83px;
  border-top: 2px solid #404147;
  display: grid;
  grid-template-columns: 1fr auto 1fr;
  align-items: center;
  background: linear-gradient(90deg, #1d222c 0, #1b202c 18%, #212121 24%, #212121 66%, #1d202a 74%, #1e212b 100%);
}
.weather { justify-self: start; gap: 10px; padding-left: 37px; }
.weather-pic { position: relative; width: 43px; height: 56px; display: flex; align-items: flex-end; padding-bottom: 2px; }
.weather-pic svg { width: 42px; height: 42px; }
.badge { position: absolute; top: -4px; right: -1px; width: 28px; height: 28px; border-radius: 50%; background: #ff99a4; color: #000; }
.two { display: flex; flex-direction: column; align-items: flex-start; line-height: 27px; }
.soft { color: #c9cacc; }
.dock { display: flex; align-items: center; gap: 7px; }
.dock button { width: 70px; height: 70px; border-radius: 7px; position: relative; }
.tb { width: 42px; height: 42px; }
.run::after { content: ""; position: absolute; bottom: 2px; left: 50%; margin-left: -6px; width: 11px; height: 5px; border-radius: 3px; background: #9b9b9c; }
.dock .active { background: #2f2f30; border: 1px solid #383839; }
.active::after { width: 28px; margin-left: -14px; background: var(--accent); }
.avatar { position: absolute; top: 5px; right: 6px; width: 28px; height: 28px; }
.search {
  width: 385px;
  height: 56px;
  margin-left: 3px;
  padding: 0 13px 0 20px;
  display: flex;
  align-items: center;
  gap: 18px;
  border-radius: 28px;
  border: 1px solid #4c4c4d;
  border-top: 2px solid #5f5f60;
  background: #404041;
}
.search input { flex: 1; min-width: 0; border: 0; padding: 0; background: none; font-size: 24px; }
.search input::placeholder { color: #cfcfcf; opacity: 1; }
.puzzle { width: 72px; height: 42px; }
.tray { justify-self: end; display: flex; align-items: center; gap: 28px; padding-right: 33px; }
.net { gap: 14px; }
.clock { flex-direction: column; align-items: flex-end; line-height: 27px; }
```
